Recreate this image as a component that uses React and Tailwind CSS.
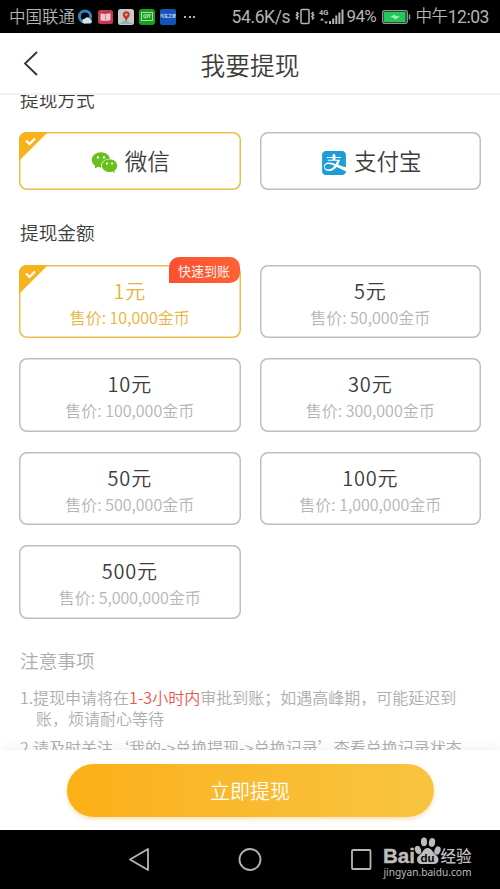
import { useState } from "react"
import { AiFillWechat } from "react-icons/ai"
import { SiAlipay } from "react-icons/si"
import clsx from "clsx"

const AMOUNTS = [
    { yuan: "1", coins: "10,000", fast: true },
    { yuan: "5", coins: "50,000" },
    { yuan: "10", coins: "100,000" },
    { yuan: "30", coins: "300,000" },
    { yuan: "50", coins: "500,000" },
    { yuan: "100", coins: "1,000,000" },
    { yuan: "500", coins: "5,000,000" },
]

function StatusBar() {
    return (
        <header className="flex h-[33px] flex-none items-center bg-black pl-[9px] font-['Roboto','Noto_Sans_CJK_SC',sans-serif] font-normal whitespace-nowrap text-[#b4b4b4]">
            <span className="w-[68px] pt-[3px] text-[16.5px] leading-none font-[350]">中国联通</span>
            <div className="flex items-center gap-[5px]">
                <svg width="16" height="16" viewBox="0 0 16 16">
                    <circle cx="8" cy="7.6" r="5.6" fill="none" stroke="#2f83bd" strokeWidth="3" />
                    <path d="M7 14.5a2.4 2.4 0 0 1 .6-4.7 3 3 0 0 1 5.4.4 2.2 2.2 0 0 1 .3 4.3z" fill="#d5e2ea" />
                </svg>
                <svg width="15" height="16" viewBox="0 0 15 16">
                    <rect y="1" width="15" height="14" rx="2.5" fill="#c33a50" />
                    <path d="M2.5 4.5 7.2 5l5.3-.8v7L7.5 12l-5-.5z" fill="#edc9cd" />
                    <path d="M7.4 5v7" stroke="#c97a84" strokeWidth=".8" />
                </svg>
                <svg width="16" height="16" viewBox="0 0 16 16">
                    <rect width="16" height="16" rx="2.5" fill="#c9c9c6" />
                    <path d="m1 15 6-4 8 4z" fill="#8fb0c4" />
                    <path d="M8.3 13C7.8 9.5 4.8 8.5 4.8 5.8a3.5 3.5 0 0 1 7 0C11.8 8.5 8.8 9.5 8.3 13z" fill="#c0392f" />
                    <circle cx="8.3" cy="5.6" r="1.2" fill="#e9b9a9" />
                </svg>
                <div className="flex size-4 items-center justify-center rounded-[3px] bg-[#17a01c]">
                    <span className="border border-[#a6dba3] px-px text-[5px] leading-[7px] font-bold text-[#c9efc6]">QIY</span>
                </div>
                <div className="flex size-4 items-center justify-center overflow-hidden rounded-[2px] bg-[#1355b5]">
                    <span className="text-[4px] leading-none font-bold text-[#d0def0]">汽车之家</span>
                </div>
                <div className="ml-[3px] flex gap-[2.5px]">
                    <i className="size-[2px] bg-[#b4b4b4]" />
                    <i className="size-[2px] bg-[#b4b4b4]" />
                    <i className="size-[2px] bg-[#b4b4b4]" />
                </div>
            </div>
            <div className="ml-auto flex items-center pr-[11px] text-[17.5px] leading-none">
                <span className="w-[63px] pt-[2px] tracking-[-0.4px]">54.6K/s</span>
                <svg width="20" height="17" viewBox="0 0 20 17" fill="none" stroke="#b4b4b4">
                    <rect x="6" y="1.5" width="8" height="14" rx="1" strokeWidth="1.5" />
                    <path d="m1.5 4 1.5 1.5L1.5 7 3 8.5 1.5 10 3 11.5M18.5 4 17 5.5 18.5 7 17 8.5 18.5 10 17 11.5" strokeWidth="1.7" />
                </svg>
                <svg className="ml-[4px]" width="26" height="18" viewBox="0 0 26 18" fill="#b4b4b4">
                    <text x="0" y="7" fontSize="7.5" fontWeight="700">4G</text>
                    <path d="M1 12.5 3 10l2 2.5zM5 13.5 7 16l2-2.5z" />
                    <path d="M10 13h2v3h-2zM13.2 10.5h2V16h-2zM16.3 7.5h2V16h-2zM19.4 4.500h2V16h-2zM22.500 1.500h2V16h-2z" />
                </svg>
                <span className="ml-[2px] w-[35px] text-[17px] tracking-[-0.7px]">94%</span>
                <svg width="29" height="14" viewBox="0 0 29 14">
                    <rect x=".7" y=".7" width="24.6" height="12.6" rx="1.5" fill="#0e2d19" stroke="#8b9b90" strokeWidth="1.3" />
                    <rect x="2" y="2" width="21.5" height="10" fill="#25c65b" />
                    <path d="m8 7 5-2.500.7 1.700H18L13 9.700l-.8-2z" fill="#a9edbd" />
                    <path d="M27.500 4.500v5" stroke="#9a9a9a" strokeWidth="1.500" />
                </svg>
                <span className="ml-[5px] flex items-center pt-[2px] tracking-[-0.45px]">
                    <span className="text-[16.5px] leading-none font-[350]">中午</span>12:03
                </span>
            </div>
        </header>
    )
}

function Card({ selected, onClick, className, children }) {
    return (
        <button
            type="button"
            onClick={onClick}
            className={clsx(
                "relative flex flex-col items-center rounded-[8px] bg-white",
                selected
                    ? "shadow-[inset_0_0_0_1.5px_#e9bf4c]"
                    : "shadow-[inset_0_0_0_1.5px_#bebebe]",
                className,
            )}
        >
            {selected ? (
                <svg className="absolute top-0 left-0" width="30" height="30" viewBox="0 0 30 30">
                    <path d="M0 29V8a8 8 0 0 1 8-8h21z" fill="#f8b21c" />
                    <path d="m7 8.5 3.5 3.5L16 6.5" fill="none" stroke="#fff" strokeWidth="2.2" />
                </svg>
            ) : null}
            {children}
        </button>
    )
}

// Corner watermark, sits over the navigation bar
function Watermark() {
    return (
        <div className="absolute top-[3px] left-[382px] h-[46px] w-[96px] text-[#bdbdbd]">
            <svg width="96" height="46" viewBox="0 0 96 46" fill="currentColor">
                <text x="1" y="29.5" fontFamily="Liberation Sans" fontWeight="700" fontSize="21" textLength="32" lengthAdjust="spacingAndGlyphs" stroke="currentColor" strokeWidth=".4">Bai</text>
                <ellipse cx="36" cy="17" rx="3" ry="4.2" transform="rotate(-20 36 17)" />
                <ellipse cx="42" cy="8.8" rx="3.1" ry="4.4" />
                <ellipse cx="50" cy="9.5" rx="3.1" ry="4.4" transform="rotate(12 50 9.5)" />
                <ellipse cx="55.5" cy="17.5" rx="3" ry="4.2" transform="rotate(20 55.5 17.5)" />
                <path d="M45.5 15c3 0 4.5 2.5 6.5 5s4.5 3.5 4.5 6.5-2 4.5-5 4.5H40c-3.5 0-5-2-5-4.5 0-3 2.5-4.5 4.5-6.5s3-5 6-5z" />
                <text x="38.5" y="29" fill="#000" fontFamily="Liberation Sans" fontWeight="700" fontSize="11.5">du</text>
                <text x="58.5" y="28.5" fontFamily="Noto Sans CJK SC" fontWeight="500" fontSize="15.5">经验</text>
                <text x="1.5" y="42.5" fontFamily="Noto Sans" fontWeight="400" fontSize="10.5" textLength="88" lengthAdjust="spacingAndGlyphs">jingyan.baidu.com</text>
            </svg>
        </div>
    )
}

export default function App() {
    const [method, setMethod] = useState("wechat")
    const [amount, setAmount] = useState("1")

    return (
        <div className="flex h-[889px] w-[500px] flex-col overflow-hidden bg-white font-['Noto_Sans_CJK_SC',sans-serif] font-[350] text-[#3c3c3c]">
            <StatusBar />
            <div className="relative flex h-[62px] flex-none items-center justify-center border-b-2 border-[#f2f2f2]">
                <svg className="absolute top-[17px] left-[23px]" width="16" height="27" viewBox="0 0 16 27" fill="none" stroke="#333" strokeWidth="1.8">
                    <path d="M14 2 2 13.5 14 25" />
                </svg>
                <h1 className="pt-[3px] text-[24.7px] leading-none font-[350]">我要提现</h1>
            </div>

            <main className="h-[655px] flex-none overflow-hidden px-5">
                <h2 className="-mt-[10px] h-[28px] text-[18.7px] leading-[28px] font-[350]">提现方式</h2>
                <div className="-mx-px mt-[19px] grid grid-cols-2 gap-[19px]">
                    <Card selected={method === "wechat"} onClick={() => setMethod("wechat")} className="h-[58px] justify-center">
                        <span className="flex items-center pb-px text-[22.5px] leading-none">
                            <AiFillWechat className="mt-1 mr-[6px] size-[29px] text-[#68c01a]" />
                            微信
                        </span>
                    </Card>
                    <Card selected={method === "alipay"} onClick={() => setMethod("alipay")} className="h-[58px] justify-center">
                        <span className="flex items-center pb-px pl-[3px] text-[22.5px] leading-none">
                            <SiAlipay className="mt-1 mr-[8px] size-[24px] text-[#1c9dd8]" />
                            支付宝
                        </span>
                    </Card>
                </div>

                <h2 className="mt-[28px] h-[28px] text-[18.7px] leading-[28px] font-[350]">提现金额</h2>
                <div className="-mx-px mt-[19px] grid grid-cols-2 gap-x-[19px] gap-y-[20px]">
                    {AMOUNTS.map(({ yuan, coins, fast }) => {
                        const selected = amount === yuan
                        return (
                            <Card key={yuan} selected={selected} onClick={() => setAmount(yuan)} className="h-[73.4px] pt-[12px]">
                                <span className={clsx("text-[20px] leading-[28px] tracking-[0.8px]", selected && "text-[#e8b33a]")}>{yuan}元</span>
                                <span className={clsx("text-[16px] leading-[25px]", selected ? "text-[#e8b33a]" : "text-[#b5b5b5]")}>
                                    售价: {coins}金币
                                </span>
                                {fast ? (
                                    <span className="absolute -top-[8px] right-px h-[26px] w-[71px] rounded-[10px] rounded-bl-none bg-linear-to-r from-[#fb5030] to-[#fd6236] text-center text-[13px] leading-[27px] text-white">
                                        快速到账
                                    </span>
                                ) : null}
                            </Card>
                        )
                    })}
                </div>

                <h2 className="mt-[27px] h-[28px] text-[18.7px] leading-[28px] font-[350] text-[#adadad]">注意事项</h2>
                <ol className="mt-[13px] text-[16px] leading-[21px] whitespace-nowrap text-[#adadad]">
                    <li className="pl-4 -indent-4">
                        1.提现申请将在<span className="text-[#e9574c]">1-3小时内</span>审批到账；如遇高峰期，可能延迟到
                        <br />
                        <span className="inline-block indent-0">账，烦请耐心等待</span>
                    </li>
                    <li className="mt-[8px] pl-4 -indent-4">2.请及时关注‘我的-&gt;兑换提现-&gt;兑换记录’查看兑换记录状态</li>
                </ol>
            </main>

            <footer className="relative flex h-[80px] flex-none justify-center bg-white pt-[14px] shadow-[0_-2px_10px_rgba(0,0,0,0.06)]">
                <button
                    type="button"
                    className="h-[53px] w-[367px] rounded-full bg-linear-to-r from-[#fbb015] to-[#f8c440] text-[20px] leading-[53px] text-white shadow-[0_2px_4px_rgba(240,160,40,0.35)]"
                >
                    立即提现
                </button>
            </footer>

            <nav className="relative h-[59px] flex-none bg-black">
                <svg width="500" height="59" viewBox="0 0 500 59" fill="none" stroke="#b5b5b5" strokeWidth="1.8" strokeLinejoin="round">
                    <path d="M148 19v21l-18-10.500z" />
                    <circle cx="250" cy="29.5" r="10.5" />
                    <rect x="352" y="20" width="18.5" height="19" rx="1" />
                </svg>
                <Watermark />
            </nav>
        </div>
    )
}
